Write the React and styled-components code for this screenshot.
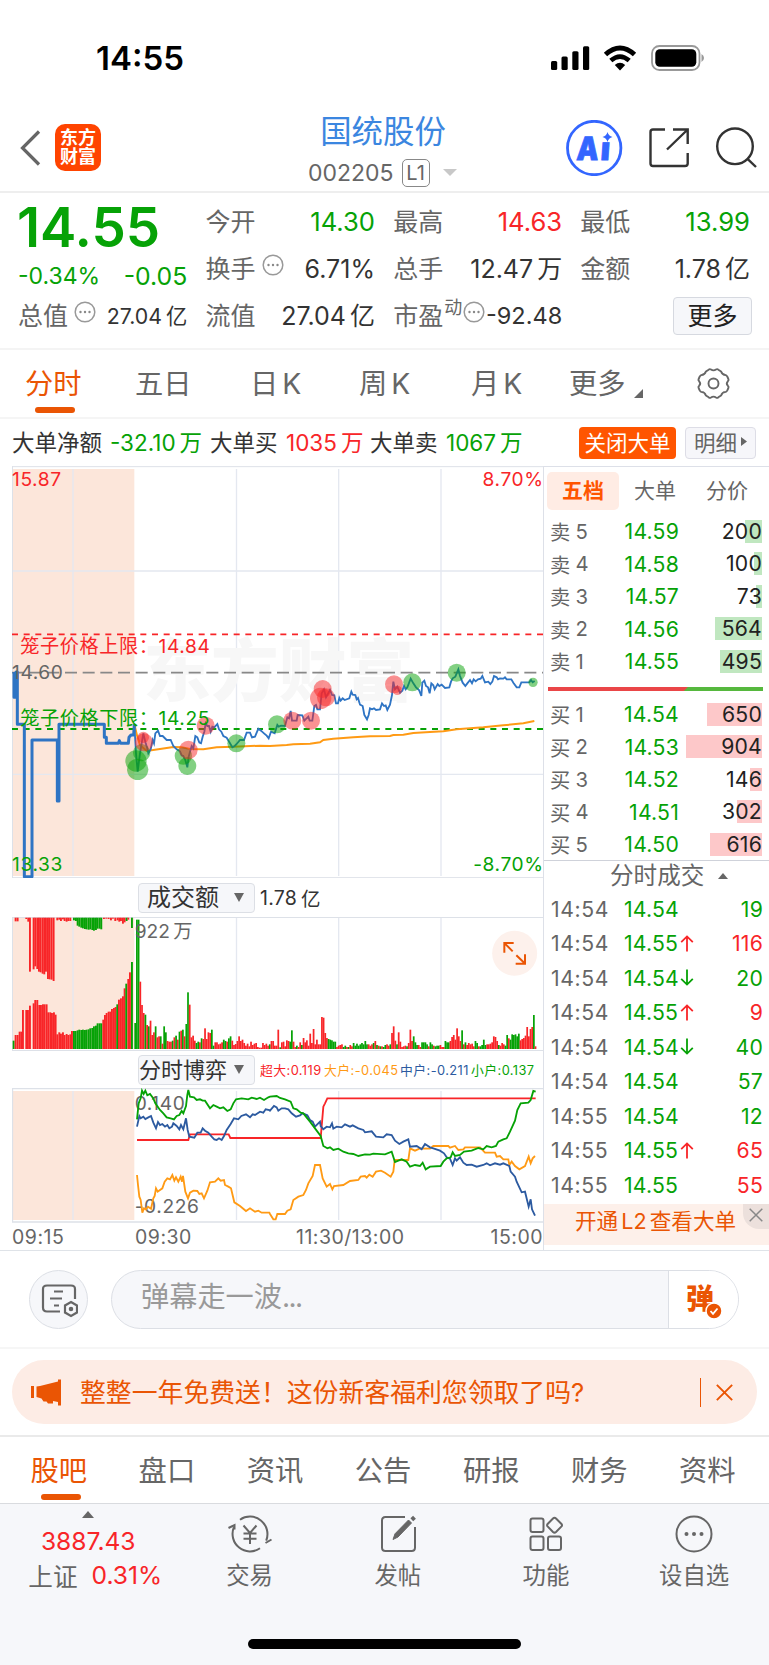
import React, { useState } from 'react'
import styled, { createGlobalStyle } from 'styled-components'

const GREEN = '#06a206'
const RED = '#f82528'
const ORANGE = '#ea5504'
const GRAY = '#666'
const FONT = "Inter, 'Noto Sans CJK SC', sans-serif"

const GlobalStyle = createGlobalStyle`
  * { box-sizing: border-box; }
  body {
    margin: 0;
    background: #fff;
    font-family: ${FONT};
    color: #333;
  }
  button {
    font-family: inherit;
    padding: 0;
    margin: 0;
    background: none;
    border: none;
  }
`

const Page = styled.div`
  width: 769px;
  height: 1665px;
  overflow: hidden;
  display: flex;
  flex-direction: column;
  background: #fff;
  white-space: nowrap;
`

/* ---------- status bar + header ---------- */

const StatusBar = styled.div`
  height: 102px;
  padding: 13px 65px 0 96px;
  display: flex;
  align-items: center;
  justify-content: space-between;
  color: #000;
`

const Clock = styled.div`
  font-size: 33px;
  font-weight: 600;
`

const Header = styled.header`
  height: 91px;
  padding: 0 12px 0 20px;
  display: grid;
  grid-template-columns: 266px 1fr 266px;
  border-bottom: 2px solid #eee;
`

const HeaderSide = styled.div`
  display: flex;
  align-items: center;
  justify-content: ${props => (props.$end ? 'flex-end' : 'flex-start')};
  gap: 14px;
  padding-top: 3px;
`

const Logo = styled.div`
  width: 46px;
  height: 47px;
  margin-top: -1px;
  border-radius: 10px;
  background: #ff4400;
  color: #fff;
  font-size: 18px;
  font-weight: 700;
  line-height: 19px;
  text-align: center;
  padding-top: 4px;
  white-space: normal;
`

const HeaderTitle = styled.div`
  display: flex;
  flex-direction: column;
  align-items: center;
  padding-top: 12px;
`

const StockName = styled.div`
  margin-left: -11px;
  font-size: 31.4px;
  line-height: 36px;
  color: #3b86e0;
`

const StockCode = styled.div`
  display: flex;
  align-items: center;
  align-self: flex-start;
  margin: 8px 0 0 22px;
  height: 28px;
  font-size: 23px;
  line-height: 28px;
  padding-top: 1px;
  color: ${GRAY};
`

const LevelTag = styled.span`
  width: 28px;
  height: 28px;
  margin: 0 13px 0 8px;
  border: 1.5px solid #888;
  border-radius: 5px;
  font-size: 20px;
  line-height: 26px;
  text-align: center;
`

const Caret = styled.i`
  display: block;
  width: 0;
  height: 0;
  border-left: ${props => props.$w / 2}px solid transparent;
  border-right: ${props => props.$w / 2}px solid transparent;
  ${props => (props.$up ? 'border-bottom' : 'border-top')}: ${props => props.$h}px solid ${props => props.$color || GRAY};
`

/* ---------- quote ---------- */

const Quote = styled.section`
  height: 157px;
  padding: 6px 19px 0 18px;
  display: grid;
  grid-template-columns: 169.3px 169.5px 169px 169.6px;
  column-gap: 18.2px;
  border-bottom: 2px solid #f4f4f4;
`

const QuoteColumn = styled.div`
  display: grid;
  grid-template-rows: repeat(3, 47px);
`

const QuoteCell = styled.div`
  display: flex;
  align-items: center;
  justify-content: space-between;
  font-size: ${props => props.$size || 25}px;
  line-height: 30px;
  padding-bottom: 1px;
  color: ${props => props.$color || '#333'};
`

const ChangeCell = styled(QuoteCell)`
  padding-top: 13px;
  color: ${GREEN};
`

const ChangeValue = styled.span`
  font-size: 24.8px;
`

const Label = styled.span`
  display: flex;
  align-items: center;
  gap: 6px;
  font-size: 25px;
  color: ${GRAY};
`

const Sup = styled.sup`
  font-size: 18px;
  line-height: 18px;
  margin: -16px -5px 0 -5px;
`

const Unit = styled.span`
  margin-left: 4px;
`

const Price = styled.div`
  font-size: 54.6px;
  font-weight: 600;
  line-height: 56px;
  color: ${GREEN};
  margin-left: -1px;
`

const MoreButton = styled.button`
  width: 79px;
  height: 38px;
  margin: 0 -2px 0 auto;
  border: 1.5px solid #d6d9e0;
  border-radius: 4px;
  background: #f6f7fa;
  font-size: 25px;
  line-height: 34px;
  color: #222;
`

/* ---------- tabs ---------- */

const PeriodTabs = styled.nav`
  height: 69px;
  padding-left: 25px;
  display: grid;
  grid-template-columns: 110px 115px 109px 112px 98px 128px 1fr;
  border-bottom: 2px solid #f5f5f5;
`

const Tab = styled.button`
  display: flex;
  align-items: center;
  gap: ${props => props.$gap || 0}px;
  position: relative;
  height: 66px;
  padding-bottom: ${props => (props.$icon ? 0 : 4)}px;
  font-size: 28.3px;
  word-spacing: -4px;
  color: ${props => (props.$active ? ORANGE : GRAY)};

  &::after {
    content: '';
    display: ${props => (props.$active ? 'block' : 'none')};
    position: absolute;
    left: 10px;
    bottom: 3px;
    width: 40px;
    height: 6px;
    border-radius: 3px;
    background: ${ORANGE};
  }
`

const OrderBar = styled.div`
  height: 47px;
  padding: 0 13px 0 12px;
  display: flex;
  align-items: center;
  font-size: 22.5px;
`

const OrderItem = styled.span`
  width: ${props => props.$w}px;
  padding-bottom: 3px;
  color: ${props => props.$color || '#333'};
`

const OrderButton = styled.button`
  height: 32px;
  width: ${props => (props.$solid ? 97 : 71)}px;
  margin-left: ${props => (props.$solid ? 'auto' : '9px')};
  padding-bottom: 3px;
  display: flex;
  align-items: center;
  justify-content: center;
  gap: 4px;
  border-radius: 4px;
  border: ${props => (props.$solid ? 'none' : '1.5px solid #dddde6')};
  background: ${props => (props.$solid ? '#ff5500' : '#f6f6fa')};
  color: ${props => (props.$solid ? '#fff' : GRAY)};
  font-size: 21.5px;
`

/* ---------- charts ---------- */

const Body = styled.main`
  height: 785px;
  display: grid;
  grid-template-columns: 544px 225px;
  border-bottom: 1px solid #dfe3e8;
`

const Charts = styled.div`
  padding-left: 12px;
  border-right: 1px solid #dde0e8;
  display: flex;
  flex-direction: column;

  svg {
    display: block;
    flex: none;
  }
`

const ChartHead = styled.div`
  height: ${props => props.$h}px;
  padding-left: 126px;
  display: flex;
  align-items: center;
  font-size: 19.5px;
  letter-spacing: 0.2px;
`

const Select = styled.button`
  width: 117px;
  height: 30px;
  margin-right: 5px;
  padding: 0 10px 0 ${props => props.$pl}px;
  display: flex;
  align-items: center;
  justify-content: space-between;
  border: 1px solid #dcdfe5;
  border-radius: 4px;
  background: #f6f7fa;
  font-size: ${props => props.$size}px;
  line-height: 26px;
  color: #333;
`

const Legend = styled.span`
  color: ${props => props.$color};
  font-size: 12.8px;
  letter-spacing: 0.45px;
  width: ${props => props.$w}px;
`

const TimeAxis = styled.div`
  height: 27px;
  display: grid;
  grid-template-columns: 123px 161px 1fr auto;
  align-items: center;
  font-size: 19.5px;
  letter-spacing: 0.5px;
  color: ${GRAY};
`

/* ---------- order book ---------- */

const Book = styled.aside`
  display: flex;
  flex-direction: column;
  border-top: 1px solid #dde0e8;
`

const BookTabs = styled.div`
  height: 48px;
  padding: 5px 3px 0;
  display: grid;
  grid-template-columns: 72px 72px 72px;
`

const BookTab = styled.button`
  height: 38px;
  padding-bottom: 4px;
  border-radius: 5px;
  font-size: 21px;
  font-weight: ${props => (props.$active ? 700 : 400)};
  background: ${props => (props.$active ? '#ffece4' : 'none')};
  color: ${props => (props.$active ? '#ff5500' : GRAY)};
`

const BookRow = styled.div`
  height: 32.5px;
  padding: 0 7px 0 6px;
  display: grid;
  grid-template-columns: 56px 73px 1fr;
  align-items: center;
  text-align: right;
  font-size: 21.2px;
  letter-spacing: 0.2px;
  color: ${GREEN};
`

const BookLabel = styled.span`
  display: flex;
  align-items: center;
  gap: 5px;
  color: ${GRAY};
  font-size: 20.3px;
`

const Volume = styled.span`
  height: 23px;
  line-height: 23px;
  color: #222;
  background: linear-gradient(${props => props.$color}, ${props => props.$color}) right / ${props => props.$w}px 100% no-repeat;
`

const Ratio = styled.div`
  height: 4.5px;
  margin: 9px 6px 7px 4px;
  background: linear-gradient(135deg, #ea4648 63.8%, #56b83e 64%);
`

const TradesHead = styled.div`
  height: 32px;
  margin-top: -1px;
  padding: 0 41px 0 66px;
  display: flex;
  align-items: center;
  justify-content: space-between;
  border-top: 1px solid #cfd2da;
  font-size: 23.6px;
  line-height: 30px;
  color: ${GRAY};
`

const Trade = styled.div`
  height: 34.5px;
  padding: 0 6px 0 7px;
  display: grid;
  grid-template-columns: 72px 57px 14px 1fr;
  align-items: center;
  font-size: 21.2px;
  letter-spacing: 0.2px;
  color: ${props => props.$color};
`

const TradeTime = styled.span`
  color: ${GRAY};
  letter-spacing: 0.6px;
`

const TradePrice = styled.span`
  padding-left: 1px;
  color: ${GREEN};
`

const TradeVolume = styled.span`
  text-align: right;
`

const L2Banner = styled.div`
  position: relative;
  height: 41px;
  margin-top: auto;
  margin-bottom: 5px;
  padding-left: 31px;
  background: #fdf0ea;
  color: ${ORANGE};
  font-size: 21.6px;
  line-height: 35px;
  word-spacing: -3px;
`

const L2Close = styled.span`
  position: absolute;
  top: 0;
  right: 0;
  width: 26px;
  height: 25px;
  display: flex;
  align-items: center;
  justify-content: center;
  padding-bottom: 3px;
  border-bottom-left-radius: 16px;
  background: #ece0dc;
`

/* ---------- comments + banner ---------- */

const Danmaku = styled.div`
  height: 98px;
  padding: 19px 30px 0;
  display: flex;
  gap: 23px;
  border-bottom: 2px solid #f6f6f6;
`

const RoundButton = styled.button`
  width: 59px;
  height: 59px;
  margin-left: -1px;
  border-radius: 50%;
  border: 1.5px solid #dcdfe5;
  background: #f6f7fa;
  display: flex;
  align-items: center;
  justify-content: center;
`

const DanmakuInput = styled.div`
  flex: 1;
  height: 59px;
  display: flex;
  overflow: hidden;
  border: 1.5px solid #dcdfe5;
  border-radius: 30px;
  background: #f6f7fa;
  font-size: 28.2px;
  line-height: 52px;
  color: #999;
  padding-left: 29px;
`

const Dots = styled.span`
  letter-spacing: -1.6px;
`

const DanmakuToggle = styled.span`
  position: relative;
  width: 70px;
  margin-left: auto;
  padding-left: 17px;
  border-left: 1.5px solid #dcdfe5;
  background: #fff;
  color: ${ORANGE};
  font-size: 28px;
  font-weight: 900;
  line-height: 56px;
`

const ToggleMark = styled.svg`
  position: absolute;
  left: 36px;
  top: 31px;
`

const Promo = styled.div`
  height: 64px;
  margin: 11px 12px;
  padding: 0 24px 0 19px;
  display: flex;
  align-items: center;
  border-radius: 32px;
  background: #fdece5;
  color: ${ORANGE};
  font-size: 25.85px;
`

const PromoText = styled.span`
  flex: 1;
  margin-left: 19px;
  padding-bottom: 4px;
`

const PromoDivider = styled.i`
  width: 1.5px;
  height: 29px;
  margin-right: 15px;
  background: ${ORANGE};
`

const InfoTabs = styled.nav`
  height: 69px;
  padding-left: 30.5px;
  display: grid;
  grid-template-columns: repeat(7, 108.1px);
  border-top: 2px solid #eaeaea;
  border-bottom: 1.5px solid #d9dbdf;
`

/* ---------- bottom bar ---------- */

const BottomBar = styled.footer`
  flex: 1;
  display: flex;
  flex-direction: column;
  justify-content: space-between;
  align-items: center;
  padding-bottom: 16px;
  background: #f6f7fa;
`

const BottomItems = styled.div`
  width: 100%;
  display: grid;
  grid-template-columns: 175.5px repeat(4, 148.2px);
`

const IndexBox = styled.div`
  display: flex;
  flex-direction: column;
  align-items: center;
  padding: 7px 0 0 1px;
  color: ${RED};
  font-size: 24.6px;
`

const IndexLine = styled.div`
  display: flex;
  gap: 14px;
  height: ${props => props.$h}px;
  align-items: center;
  margin-right: ${props => props.$shift || 0}px;
`

const IndexName = styled.span`
  color: ${GRAY};
`

const Action = styled.button`
  display: flex;
  flex-direction: column;
  align-items: center;
  padding-top: 9px;
  font-size: 23.4px;
  color: ${GRAY};
`

const ActionLabel = styled.span`
  margin-top: 4px;
  line-height: 34px;
`

const HomeIndicator = styled.div`
  width: 273px;
  height: 10px;
  border-radius: 5px;
  background: #000;
`

/* ---------- data ---------- */

const periods = ['五日', '日 K', '周 K', '月 K']
const infoTabs = ['股吧', '盘口', '资讯', '公告', '研报', '财务', '资料']

const asks = [
  ['卖', 5, '14.59', 200, 17],
  ['卖', 4, '14.58', 100, 8],
  ['卖', 3, '14.57', 73, 6],
  ['卖', 2, '14.56', 564, 47.5],
  ['卖', 1, '14.55', 495, 42],
]

const bids = [
  ['买', 1, '14.54', 650, 55],
  ['买', 2, '14.53', 904, 76],
  ['买', 3, '14.52', 146, 12],
  ['买', 4, '14.51', 302, 25],
  ['买', 5, '14.50', 616, 52],
]

const trades = [
  ['14:54', '14.54', 19, 'down', false],
  ['14:54', '14.55', 116, 'up', true],
  ['14:54', '14.54', 20, 'down', true],
  ['14:54', '14.55', 9, 'up', true],
  ['14:54', '14.54', 40, 'down', true],
  ['14:54', '14.54', 57, 'down', false],
  ['14:55', '14.54', 12, 'down', false],
  ['14:55', '14.55', 65, 'up', true],
  ['14:55', '14.55', 55, 'up', false],
]

// chart data, three units per css pixel
const AFTERNOON = 810

const auction = '42,636 42,712 48,712 48,636 52,636 52,793 73,793 73,1250 96,1250 96,840 172,840 172,1023 177,1023 177,793 313,793 313,832 319,832 319,850 355,850 358,842 362,850 385,850 387,832 393,825 401,825 403,793'

const price1 = '403,793 408,880 413,935 420,880 425,850 430,820 437,850 441,862 445,880 452,868 458,840 462,850 466,820 474,812 480,828 488,828 500,840 512,840 520,858 530,868 540,874 545,886 550,888 556,900 562,922 566,890 570,875 575,858 580,865 586,828 592,832 598,848 603,850 608,830 613,815 617,790 622,798 627,798 632,815 637,800 643,802 652,792 657,808 664,815 670,828 680,833 690,850 697,862 704,858 710,852 720,840 732,840 740,818 750,818 756,832 765,830 775,806 783,812 792,820 800,827 806,835 813,815 824,820 832,795'
const price2 = '26,380 33,377 45,378 52,352 57,355 62,333 66,362 80,362 83,345 97,346 103,362 115,350 119,362 127,362 133,318 138,315 142,328 150,328 155,280 162,268 168,292 180,270 186,285 193,286 198,310 204,310 208,294 212,302 218,295 224,300 238,295 244,275 248,284 256,285 260,298 264,294 270,314 278,318 283,345 291,358 296,345 300,325 306,328 312,325 318,330 330,328 336,310 342,318 347,316 352,330 360,314 366,285 370,245 375,268 382,260 390,278 397,272 402,258 407,268 412,262 422,236 430,250 438,262 447,270 454,288 457,248 463,242 468,258 474,262 479,280 484,250 490,256 494,268 503,252 508,258 515,254 525,264 538,262 543,245 548,235 556,230 560,220 565,208 570,228 578,248 586,258 592,250 600,240 606,250 611,238 617,244 624,238 632,236 637,228 645,247 655,245 661,252 667,245 672,228 680,232 684,238 690,235 700,236 705,232 710,238 724,238 730,248 740,262 748,262 754,247 778,247 783,240 788,247 794,243'

const average1 = '403,793 412,830 420,855 440,873 480,867 520,861 545,862 570,867 610,868 650,862 700,860 780,857'
const average2 = '0,438 50,435 70,433 120,431 150,427 160,420 190,416 250,412 300,409 360,408 370,405 400,404 430,399 480,396 520,394 560,388 580,386 640,382 700,376 760,370 793,363'

const marks = [
  ['g', 408, 903, 32], ['g', 413, 928, 32], ['g', 425, 878, 26], ['r', 432, 847, 27], ['r', 430, 832, 17],
  ['g', 550, 888, 26], ['g', 562, 918, 27], ['r', 565, 870, 28], ['r', 617, 797, 27], ['g', 709, 850, 27],
  ['g', 831, 793, 27], ['r', 877, 782, 27], ['r', 933, 782, 27], ['r', 968, 687, 27], ['r', 962, 715, 32],
  ['r', 978, 712, 27], ['r', 1182, 673, 27], ['r', 1192, 691, 14], ['g', 1237, 667, 27],
  ['g', 1370, 638, 27], ['g', 1599, 667, 14],
]

// [x, height], negative heights are green bars
const auctionVolume = [
  [38, -25], [44, 42], [50, 42], [56, 52], [61, 52], [66, 117], [76, 117], [81, 117], [87, 130],
  [98, 137], [103, 147], [109, 147], [115, 132], [120, 132], [126, 134], [131, 134], [137, 134], [142, 110],
  [148, 110], [153, 108], [159, 110], [164, 103], [169, 44], [175, 50], [180, 46], [186, 50], [191, 42],
  [197, 45], [202, 42], [208, 44], [213, 54], [219, -54], [224, -54], [230, -56], [235, -58], [241, -57],
  [246, -58], [252, -57], [257, -58], [263, -59], [268, -62], [274, -63], [279, -68], [285, -70], [290, -77],
  [296, -77], [301, -77], [307, 88], [312, 102], [317, 108], [323, 112], [328, 112], [333, 120], [339, 123],
  [344, 126], [349, -134], [354, 148], [360, 152], [366, 158], [371, 182], [376, -196], [382, 210], [387, 230], [393, -261],
]

const cancelVolume = [
  [44, 11], [50, 11], [76, 4], [82, 12], [87, 162], [98, 155], [103, 146], [109, 154], [114, 162],
  [119, 164], [125, 168], [130, 170], [135, 162], [141, 184], [146, 185], [152, 186], [158, 190],
  [169, 8], [175, 6], [180, 10], [186, 5], [191, 10], [197, 12], [202, 10], [208, 10],
  [219, -8], [225, -10], [230, -24], [235, -27], [241, -30], [246, -32], [252, -34], [257, -35], [263, -36],
  [268, -35], [274, -37], [279, -39], [285, -37], [290, -33], [296, -33], [301, -35],
  [309, 4], [316, 3], [323, 4], [330, 8], [336, 3], [343, 10], [350, 8], [355, 12], [360, 10], [366, 18], [371, 14], [377, -10], [382, 6], [393, -31],
]

const morningVolume = [
  -78, -388, -388, 202, 132, 108, -103, 72, -68, 85, 42, 50, -68, 35, 38, -38, 16, -68, -50, 24, 22, 22, -25, 35, -40, 28, -52,
  55, -58, 38, -75, -170, 133, 35, 40, 25, -18, -22, 20, -32, 30, 62, 30, 50, 48, -58, -10, 20, 20, 14, 16, 20, -28, -24,
  22, -32, -38, 25, 12, 15, 24, 38, 24, 28, 18, 10, 16, 8, 22, 12, 16, 18, 6, 4, 4, 18, 12, 16, 10, -14, 24, 24, 10, 10, 58,
]

const afternoonVolume = [
  -5, 20, 22, 8, 26, 24, -22, -56, 22, 6, -10, 6, 20, -12, 33, 20, 26, 10, 46, 18, 60, 14, 28, 14, 14, 96, 94, 48, 33, -30, -28, -26, -22,
  -22, 6, 10, 12, 14, -6, -10, 6, -6, 12, 8, -18, -10, -16, -10, -14, -18, -14, -24, -14, 14, 10, 14, -18, 24, -12, 10, -8, 8, -6,
  -12, 14, 10, -14, 48, 68, 25, -14, 50, 22, 6, 8, 10, -8, 18, 58, 24, -38, -20, -12, 12, 6, -20, -20, -20, -14, 8, -20, -14, 10,
  -8, -10, -10, 12, 6, 6, -24, -20, -20, 24, 36, 42, 28, 62, 38, 24, -56, 14, -20, 12, 18, 14, 16, 8, -24, -18, 8, -8, -12, -28,
  -12, 14, 14, 16, 20, 38, 36, 24, -12, 10, 18, 14, -10, -42, 32, -28, -44, -42, -44, -38, -46, 26, 30, 33, 40, 66, 38, 60, 66, -102, 8,
]

const minuteBars = [
  ...morningVolume.map((h, i) => [403 + i * 5.11, h]),
  ...afternoonVolume.map((h, i) => [838 + (i * 766) / (afternoonVolume.length - 1), h]),
]

const flows = [
  {
    color: '#ff9a14',
    first: '411,915 414,945 418,980 422,990 427,1028 432,1015 438,1018 444,1010 453,1016 460,985 464,978 468,955 473,965 487,955 494,935 502,925 510,928 517,915 523,932 528,922 535,935 542,920 546,935 549,918 556,965 564,985 570,968 580,962 592,963 598,972 605,970 612,985 622,962 630,937 645,935 655,925 662,932 672,930 675,945 685,950 693,955 703,997 720,1008 738,1023 750,1015 765,1025 775,1022 785,1028 808,1028',
    second: '0,1032 10,1048 17,1048 22,1032 45,1032 52,1022 62,1018 70,990 85,980 100,975 108,960 115,940 128,918 135,885 150,885 158,925 170,950 180,942 187,958 192,948 220,945 240,933 265,930 272,920 285,918 290,923 298,914 308,920 318,905 333,902 345,908 362,920 370,905 374,870 415,870 420,835 435,842 450,835 480,836 490,828 535,828 540,833 555,828 565,840 580,838 585,832 630,832 645,848 675,848 680,860 690,858 700,868 715,868 718,885 725,875 735,888 748,898 765,888 776,860 782,880 788,865 795,858',
  },
  {
    color: RED,
    first: '411,810 565,810 570,793 686,793 691,804 810,804',
    second: '0,804 152,804 160,710 165,700 172,685 797,685',
  },
  {
    color: '#2c5aa0',
    first: '411,770 418,738 422,745 430,740 436,747 445,742 453,738 460,758 468,775 474,756 480,765 487,762 495,770 502,765 508,775 516,770 520,760 530,768 538,778 543,765 550,778 558,745 563,780 568,800 583,803 592,788 602,788 608,775 615,782 625,788 635,800 643,808 650,810 657,805 665,810 672,798 680,780 692,762 702,745 715,748 724,738 738,733 750,742 758,733 765,735 780,725 790,728 797,718 808,720',
    second: '0,722 12,708 20,712 25,722 35,715 45,715 55,718 65,730 78,740 90,736 98,730 112,736 120,750 128,755 135,770 150,755 152,768 160,778 170,770 180,772 186,760 190,776 200,770 215,772 225,763 240,770 248,766 265,775 280,780 285,787 305,784 318,800 340,802 350,793 365,795 375,812 388,822 400,815 415,808 420,830 440,828 455,838 465,822 480,832 490,835 510,842 522,850 530,862 540,866 548,885 555,865 560,872 570,862 580,878 590,885 605,884 620,890 640,885 650,880 660,886 675,880 690,884 700,880 718,888 722,905 735,920 740,935 755,967 765,965 776,1010 782,988 786,1018 795,1037',
  },
  {
    color: GREEN,
    first: '411,748 416,700 422,685 426,662 431,672 436,662 442,676 450,672 460,685 466,700 480,720 490,730 500,742 512,745 522,748 530,738 538,735 545,723 550,730 558,708 562,675 565,660 570,680 582,682 590,690 600,688 608,692 615,692 630,715 640,705 650,710 660,715 670,712 682,723 692,718 700,700 708,688 725,685 745,688 755,683 770,687 780,683 792,690 805,682',
    second: '0,680 20,678 30,684 45,688 62,695 70,715 80,718 92,728 100,730 112,745 120,755 135,775 152,798 160,828 172,835 180,832 190,840 205,836 220,845 235,850 250,852 265,858 285,853 300,854 310,851 345,853 365,845 375,876 385,872 395,868 410,875 420,890 435,885 450,888 458,878 467,898 480,890 512,888 520,875 530,865 542,862 548,847 555,858 570,855 582,845 605,842 625,834 640,838 650,828 665,832 678,828 685,815 700,808 710,805 720,785 735,752 742,720 752,700 775,698 782,690 790,663 797,665',
  },
]

const joinTrace = (first, second, dy = 0) => {
  const shifted = second.split(' ').map(pair => {
    const [x, y] = pair.split(',').map(Number)
    return `${x + AFTERNOON},${y + dy}`
  })
  return `${first} ${shifted.join(' ')}`
}

/* ---------- icons ---------- */

const DotsIcon = styled.svg`
  margin-top: -9px;
`

const CornerIcon = styled.svg`
  margin-top: 24px;
`

const MoreDots = () => (
  <DotsIcon width="22" height="22" viewBox="0 0 22 22">
    <circle cx="11" cy="11" r="9.8" fill="none" stroke="#999" strokeWidth="1.5" />
    <circle cx="6.5" cy="11" r="1.2" fill="#888" />
    <circle cx="11" cy="11" r="1.2" fill="#888" />
    <circle cx="15.5" cy="11" r="1.2" fill="#888" />
  </DotsIcon>
)

const StatusIcons = () => (
  <svg width="154" height="28" viewBox="550 43 154 28">
    <rect x="551" y="60" width="6.2" height="9" rx="1.5" />
    <rect x="561.5" y="55.5" width="6.2" height="13.5" rx="1.5" />
    <rect x="572.3" y="50.3" width="6.2" height="18.7" rx="1.5" />
    <rect x="583" y="45.3" width="6.2" height="23.7" rx="1.5" />
    <path d="M605.5 53.5 Q620 40.5 634.5 53.5" fill="none" stroke="#000" strokeWidth="5" />
    <path d="M610.8 59.6 Q620 51.5 629.2 59.6" fill="none" stroke="#000" strokeWidth="4.6" />
    <path d="M614.8 64 Q620 59.6 625.2 64 L620 69.5 Z" />
    <rect x="652" y="45" width="47.5" height="24" rx="7.5" fill="none" stroke="#999" strokeWidth="1.8" />
    <rect x="655.3" y="48.2" width="41" height="17.6" rx="4.5" />
    <path d="M701.5 53 Q704 54.5 704 57 Q704 59.5 701.5 61 Z" fill="#999" />
  </svg>
)

const HeaderIcons = () => (
  <svg width="191" height="56" viewBox="566 120 191 56" fill="none">
    <circle cx="594.2" cy="148" r="26.7" stroke="#3366ff" strokeWidth="2.8" />
    <g fontFamily={FONT} fontWeight="900" fontSize="32" fill="#3366ff" stroke="#3366ff" strokeWidth="0.8" transform="translate(576 159.5) skewX(-4)">
      <text x="0" y="0" textLength="22" lengthAdjust="spacingAndGlyphs">A</text>
      <text x="24" y="0">ı</text>
    </g>
    <path d="M607.5 132 Q608.5 136 612.5 137 Q608.5 138 607.5 142 Q606.5 138 602.5 137 Q606.5 136 607.5 132 Z" fill="#3366ff" />
    <g stroke="#333" strokeWidth="2.4">
      <path d="M665 129.5 H653 Q650.5 129.5 650.5 132 V163.5 Q650.5 166 653 166 H685 Q687.7 166 687.7 163.5 V153" />
      <path d="M673 129.5 H687.7 V144 M687.7 129.5 L667 149.5" />
      <circle cx="735" cy="146.3" r="17.8" />
      <path d="M747.5 158.8 L756 167" />
    </g>
  </svg>
)

const Gear = () => (
  <svg width="33" height="33" viewBox="-16.5 -16.5 33 33" fill="none" stroke="#666" strokeWidth="1.9" strokeLinejoin="round">
    <path d="M-4.8 -13.8 Q-3.8 -14.8 -2.5 -14 Q0 -12.2 2.5 -14 Q3.8 -14.8 4.8 -13.8 L7.6 -12 Q8.6 -8.6 12.3 -8.4 Q13.4 -8 14 -6.5 L15 -4.2 Q15.3 -3 14.3 -2.2 Q12.3 0 14.3 2.2 Q15.3 3 15 4.2 L14 6.5 Q13.4 8 12.3 8.4 Q8.6 8.6 7.6 12 L4.8 13.8 Q3.8 14.8 2.5 14 Q0 12.2 -2.5 14 Q-3.8 14.8 -4.8 13.8 L-7.6 12 Q-8.6 8.6 -12.3 8.4 Q-13.4 8 -14 6.5 L-15 4.2 Q-15.3 3 -14.3 2.2 Q-12.3 0 -14.3 -2.2 Q-15.3 -3 -15 -4.2 L-14 -6.5 Q-13.4 -8 -12.3 -8.4 Q-8.6 -8.6 -7.6 -12 Z" />
    <circle r="5" />
  </svg>
)

const Cross = ({ size, color, width = 2 }) => (
  <svg width={size} height={size} viewBox="0 0 16 16" stroke={color} strokeWidth={width}>
    <path d="M0.8 0.8 L15.2 15.2 M15.2 0.8 L0.8 15.2" />
  </svg>
)

const Arrow = ({ up }) => (
  <svg width="14" height="17" viewBox="0 0 14 17" fill="none" stroke={up ? RED : GREEN} strokeWidth="1.8">
    <path d={up ? 'M7 16.5 V1.5 M1.2 7.2 L7 1.4 L12.8 7.2' : 'M7 0.5 V15.5 M1.2 9.8 L7 15.6 L12.8 9.8'} />
  </svg>
)

const actionIcons = {
  trade: (
    <svg width="44" height="42" viewBox="228 1513 44 42" fill="none" stroke="#666" strokeWidth="2">
      <path d="M240 1519.7 A17.5 17.5 0 0 1 266.2 1540.6 M265.5 1543 L271.5 1539.5" />
      <path d="M260 1548.3 A17.5 17.5 0 0 1 233.8 1527.4 M228.5 1528 L234.5 1525 V1529.5" />
      <path d="M243.5 1525.5 L250 1533 L256.5 1525.5 M250 1533 V1544 M243.5 1533.5 H256.5 M243.5 1538.7 H256.5" />
    </svg>
  ),
  post: (
    <svg width="44" height="42" viewBox="376 1513 44 42" fill="none" stroke="#666" strokeWidth="2">
      <path d="M405 1517 H385.5 Q382 1517 382 1520.5 V1547.5 Q382 1551 385.5 1551 H411.5 Q415 1551 415 1547.5 V1527" />
      <path d="M393 1539.5 L395 1533.8 L408.5 1520 L411.5 1523 L398 1537 Z" fill="#666" strokeWidth="1" />
      <path d="M411.8 1519.8 L414.5 1517.2" strokeWidth="4" />
    </svg>
  ),
  feature: (
    <svg width="44" height="42" viewBox="525 1513 44 42" fill="none" stroke="#666" strokeWidth="2">
      <rect x="531.5" y="1518.5" width="13" height="13.5" rx="2" />
      <rect x="531.5" y="1536.5" width="13" height="13.5" rx="2" />
      <rect x="549" y="1536.5" width="13" height="13.5" rx="2" />
      <path d="M554 1518.5 Q555.5 1517 557 1518.5 L562.5 1524 Q563.5 1525.2 562.5 1526.4 L557 1532 Q555.5 1533.3 554 1532 L548.6 1526.4 Q547.6 1525.2 548.6 1524 Z" />
    </svg>
  ),
  more: (
    <svg width="44" height="42" viewBox="672 1513 44 42" fill="none" stroke="#666" strokeWidth="2">
      <circle cx="694" cy="1534" r="17.5" />
      <g fill="#666" stroke="none">
        <circle cx="686.5" cy="1534" r="2" />
        <circle cx="694" cy="1534" r="2" />
        <circle cx="701.5" cy="1534" r="2" />
      </g>
    </svg>
  ),
}

const actions = [
  ['trade', '交易'],
  ['post', '发帖'],
  ['feature', '功能'],
  ['more', '设自选'],
]

/* ---------- chart components ---------- */

const GridColumns = ({ top, bottom }) => (
  <g>
    <rect x="36" y={top} width="367" height={bottom - top} fill="#fce6da" />
    <path d={`M219 ${top} V${bottom} M709.5 ${top} V${bottom} M1016 ${top} V${bottom} M1323 ${top} V${bottom}`} stroke="#e4e8f0" strokeWidth="4" />
  </g>
)

const PriceChart = () => (
  <svg width="531" height="412" viewBox="36 18 1593 1236" fontFamily={FONT} fontSize="57.5" letterSpacing="1.8" fill="none">
    <GridColumns top={27} bottom={1248} />
    <path d="M36 333 H1629 M36 943 H1629" stroke="#e4e8f0" strokeWidth="4" />
    <path d="M36 20 H1629 M37.5 18 V1254 M36 1253 H1629" stroke="#dde1e8" strokeWidth="3" />
    <text x="430" y="708" fontSize="203" letterSpacing="0" fontWeight="900" fill="#f7f7f7">东方财富</text>
    <path d="M36 523 H1629" stroke={RED} strokeWidth="5" strokeDasharray="18 17" />
    <path d="M36 638 H1629" stroke="#888" strokeWidth="5" strokeDasharray="36 17" />
    <path d="M36 807 H1629" stroke={GREEN} strokeWidth="6" strokeDasharray="18 17" />
    <polyline points={joinTrace(average1, average2, 420)} stroke="#ff9a14" strokeWidth="6" />
    <polyline points={auction} stroke="#2e74c4" strokeWidth="9" strokeLinejoin="round" />
    <polyline points={joinTrace(price1, price2, 420)} stroke="#2e74c4" strokeWidth="5.5" />
    {marks.map(([side, x, y, r]) => (
      <circle key={`${x}-${y}`} cx={x} cy={y} r={r} fill={side === 'g' ? GREEN : RED} fillOpacity="0.5" />
    ))}
    <text x="36" y="77" fill={RED}>15.87</text>
    <text x="1631" y="77" fill={RED} textAnchor="end">8.70%</text>
    <text x="61" y="580" fill={RED}>笼子价格上限：14.84</text>
    <text x="36" y="656" fill={GRAY}>14.60</text>
    <text x="61" y="795" fill={GREEN}>笼子价格下限：14.25</text>
    <text x="36" y="1234" fill={GREEN}>13.33</text>
    <text x="1631" y="1234" fill={GREEN} textAnchor="end">-8.70%</text>
  </svg>
)

const VolumeChart = () => (
  <svg width="531" height="134" viewBox="36 141 1593 402" fontFamily={FONT} fontSize="57.5">
    <GridColumns top={143} bottom={537} />
    <path d="M36 142.5 H1629 M37.5 141 V543 M36 541.5 H1629" stroke="#dde1e8" strokeWidth="3" />
    {auctionVolume.map(([x, h]) => (
      <rect key={x} x={x} y={537 - Math.abs(h)} width="5.7" height={Math.abs(h)} fill={h < 0 ? GREEN : RED} />
    ))}
    {cancelVolume.map(([x, h]) => (
      <rect key={x} x={x} y="143" width="5.7" height={Math.abs(h)} fill={h < 0 ? GREEN : RED} />
    ))}
    {minuteBars.map(([x, h]) => (
      <rect key={x} x={x} y={537 - Math.abs(h)} width="5.2" height={Math.abs(h)} fill={h < 0 ? GREEN : RED} />
    ))}
    <text x="404" y="204" fill={GRAY}>922</text>
    <text x="520" y="204" fill={GRAY}>万</text>
    <circle cx="1544" cy="250" r="67.5" fill="#fdf1ec" />
    <g fill="none" stroke={ORANGE} strokeWidth="6">
      <path d="M1513 248 V219 H1541 M1514 220 L1538 244" />
      <path d="M1547 281 H1575 V253 M1574 280 L1549 256" />
    </g>
  </svg>
)

const FlowChart = () => (
  <svg width="531" height="135" viewBox="36 654 1593 405" fontFamily={FONT} fontSize="57.5" letterSpacing="1.8">
    <GridColumns top={663} bottom={1050} />
    <path d="M36 655.5 H1629 M37.5 654 V1056 M36 1056 H1629" stroke="#dde1e8" strokeWidth="4" />
    <text x="404" y="719" fill={GRAY}>0.140</text>
    <text x="404" y="1030" fill={GRAY}>-0.226</text>
    {flows.map(({ color, first, second }) => (
      <polyline key={color} points={joinTrace(first, second)} fill="none" stroke={color} strokeWidth="5.5" />
    ))}
  </svg>
)

const BookRows = ({ rows, color }) => rows.map(([side, level, price, volume, width]) => (
  <BookRow key={side + level}>
    <BookLabel><span>{side}</span><span>{level}</span></BookLabel>
    <span>{price}</span>
    <Volume $w={width} $color={color}>{volume}</Volume>
  </BookRow>
))

const App = () => {
  const [activeInfo, setActiveInfo] = useState('股吧')

  return (
    <Page>
      <GlobalStyle />
      <StatusBar>
        <Clock>14:55</Clock>
        <StatusIcons />
      </StatusBar>

      <Header>
        <HeaderSide>
          <svg width="21" height="36" viewBox="0 0 21 36" fill="none" stroke="#666" strokeWidth="3.2">
            <path d="M19 1.5 L2.5 18 L19 34.5" />
          </svg>
          <Logo>东方 财富</Logo>
        </HeaderSide>
        <HeaderTitle>
          <StockName>国统股份</StockName>
          <StockCode>
            002205
            <LevelTag>L1</LevelTag>
            <Caret $w={14} $h={7} $color="#c8c8c8" />
          </StockCode>
        </HeaderTitle>
        <HeaderSide $end>
          <HeaderIcons />
        </HeaderSide>
      </Header>

      <Quote>
        <QuoteColumn>
          <Price>14.55</Price>
          <ChangeCell $size={23}><span>-0.34%</span><ChangeValue>-0.05</ChangeValue></ChangeCell>
          <QuoteCell $size={21.3}><Label>总值 <MoreDots /></Label><span>27.04<Unit>亿</Unit></span></QuoteCell>
        </QuoteColumn>
        <QuoteColumn>
          <QuoteCell $color={GREEN} $size={25.6}><Label>今开</Label>14.30</QuoteCell>
          <QuoteCell><Label>换手 <MoreDots /></Label>6.71%</QuoteCell>
          <QuoteCell><Label>流值</Label><span>27.04<Unit>亿</Unit></span></QuoteCell>
        </QuoteColumn>
        <QuoteColumn>
          <QuoteCell $color={RED} $size={25.6}><Label>最高</Label>14.63</QuoteCell>
          <QuoteCell><Label>总手</Label><span>12.47<Unit>万</Unit></span></QuoteCell>
          <QuoteCell $size={23.5}><Label>市盈<Sup>动</Sup><MoreDots /></Label>-92.48</QuoteCell>
        </QuoteColumn>
        <QuoteColumn>
          <QuoteCell $color={GREEN} $size={25.6}><Label>最低</Label>13.99</QuoteCell>
          <QuoteCell><Label>金额</Label><span>1.78<Unit>亿</Unit></span></QuoteCell>
          <QuoteCell><MoreButton>更多</MoreButton></QuoteCell>
        </QuoteColumn>
      </Quote>

      <PeriodTabs>
        <Tab $active>分时</Tab>
        {periods.map(name => <Tab key={name}>{name}</Tab>)}
        <Tab $gap={8}>
          更多
          <CornerIcon width="9" height="9" viewBox="0 0 9 9"><path d="M9 0 V9 H0 Z" fill="#666" /></CornerIcon>
        </Tab>
        <Tab $icon><Gear /></Tab>
      </PeriodTabs>

      <OrderBar>
        <OrderItem $w={98}>大单净额</OrderItem>
        <OrderItem $w={100}  $color={GREEN}>-32.10<Unit>万</Unit></OrderItem>
        <OrderItem $w={76}>大单买</OrderItem>
        <OrderItem $w={84} $color={RED}>1035<Unit>万</Unit></OrderItem>
        <OrderItem $w={76}>大单卖</OrderItem>
        <OrderItem $w={84} $color={GREEN}>1067<Unit>万</Unit></OrderItem>
        <OrderButton $solid>关闭大单</OrderButton>
        <OrderButton>
          明细
          <svg width="6" height="9" viewBox="0 0 6 9"><path d="M0 0 L6 4.5 L0 9 Z" fill="#666" /></svg>
        </OrderButton>
      </OrderBar>

      <Body>
        <Charts>
          <PriceChart />
          <ChartHead $h={39}>
            <Select $size={24} $pl={8}>成交额<Caret $w={10} $h={9} /></Select>
            1.78<Unit>亿</Unit>
          </ChartHead>
          <VolumeChart />
          <ChartHead $h={37}>
            <Select $size={22} $pl={0}>分时博弈<Caret $w={10} $h={9} /></Select>
            <Legend $w={64} $color={RED}>超大:0.119</Legend>
            <Legend $w={76} $color="#ff9a14">大户:-0.045</Legend>
            <Legend $w={71} $color="#2c5aa0">中户:-0.211</Legend>
            <Legend $color={GREEN}>小户:0.137</Legend>
          </ChartHead>
          <FlowChart />
          <TimeAxis>
            <span>09:15</span>
            <span>09:30</span>
            <span>11:30/13:00</span>
            <span>15:00</span>
          </TimeAxis>
        </Charts>

        <Book>
          <BookTabs>
            <BookTab $active>五档</BookTab>
            <BookTab>大单</BookTab>
            <BookTab>分价</BookTab>
          </BookTabs>
          <BookRows rows={asks} color="#c0e7c0" />
          <Ratio />
          <BookRows rows={bids} color="#fdc8c9" />
          <TradesHead>分时成交<Caret $up $w={11} $h={6} /></TradesHead>
          {trades.map(([time, price, volume, side, arrow], i) => (
            <Trade key={i} $color={side === 'up' ? RED : GREEN}>
              <TradeTime>{time}</TradeTime>
              <TradePrice>{price}</TradePrice>
              {arrow ? <Arrow up={side === 'up'} /> : <span />}
              <TradeVolume>{volume}</TradeVolume>
            </Trade>
          ))}
          <L2Banner>
            开通 L2 查看大单
            <L2Close><Cross size={14} color="#888" width={1.7} /></L2Close>
          </L2Banner>
        </Book>
      </Body>

      <Danmaku>
        <RoundButton>
          <svg width="38" height="36" viewBox="40 1282 38 36" fill="none" stroke="#666" strokeWidth="2.2">
            <path d="M60 1311.5 H47 Q43 1311.5 43 1307.5 V1289 Q43 1285.5 47 1285.5 H71 Q75 1285.5 75 1289 V1299" />
            <path d="M54 1291.5 H63 M50 1298.5 H62 M54 1305.5 H59" />
            <path d="M71 1302 L77 1305.5 V1312.5 L71 1316 L65 1312.5 V1305.5 Z" />
            <circle cx="71" cy="1309" r="1.2" />
          </svg>
        </RoundButton>
        <DanmakuInput>
          弹幕走一波<Dots>...</Dots>
          <DanmakuToggle>
            弹
            <ToggleMark width="18" height="18" viewBox="0 0 18 18">
              <circle cx="9" cy="9" r="8" fill={ORANGE} stroke="#fff" strokeWidth="1.5" />
              <path d="M5.5 9 L8 11.8 L12.5 6.5" fill="none" stroke="#fff" strokeWidth="1.8" />
            </ToggleMark>
          </DanmakuToggle>
        </DanmakuInput>
      </Danmaku>

      <Promo>
        <svg width="30" height="27" viewBox="0 0 30 27" fill={ORANGE}>
          <path d="M0 7 H3 V19 H0 Z M5.5 7.5 L9 7 L27 2.5 V0.5 H30 V26.5 H27 V23 L22 22 V24.5 H17 L15.5 22.5 H12.5 L10.5 19.5 L5.5 18 Z" />
        </svg>
        <PromoText>整整一年免费送！这份新客福利您领取了吗?</PromoText>
        <PromoDivider />
        <Cross size={17} color={ORANGE} width={1.8} />
      </Promo>

      <InfoTabs>
        {infoTabs.map(name => (
          <Tab key={name} $active={name === activeInfo} onClick={() => setActiveInfo(name)}>{name}</Tab>
        ))}
      </InfoTabs>

      <BottomBar>
        <BottomItems>
          <IndexBox>
            <Caret $up $w={13} $h={7} />
            <IndexLine $h={45}>3887.43</IndexLine>
            <IndexLine $h={24} $shift={-14}><IndexName>上证</IndexName>0.31%</IndexLine>
          </IndexBox>
          {actions.map(([icon, label]) => (
            <Action key={icon}>
              {actionIcons[icon]}
              <ActionLabel>{label}</ActionLabel>
            </Action>
          ))}
        </BottomItems>
        <HomeIndicator />
      </BottomBar>
    </Page>
  )
}

export default App
